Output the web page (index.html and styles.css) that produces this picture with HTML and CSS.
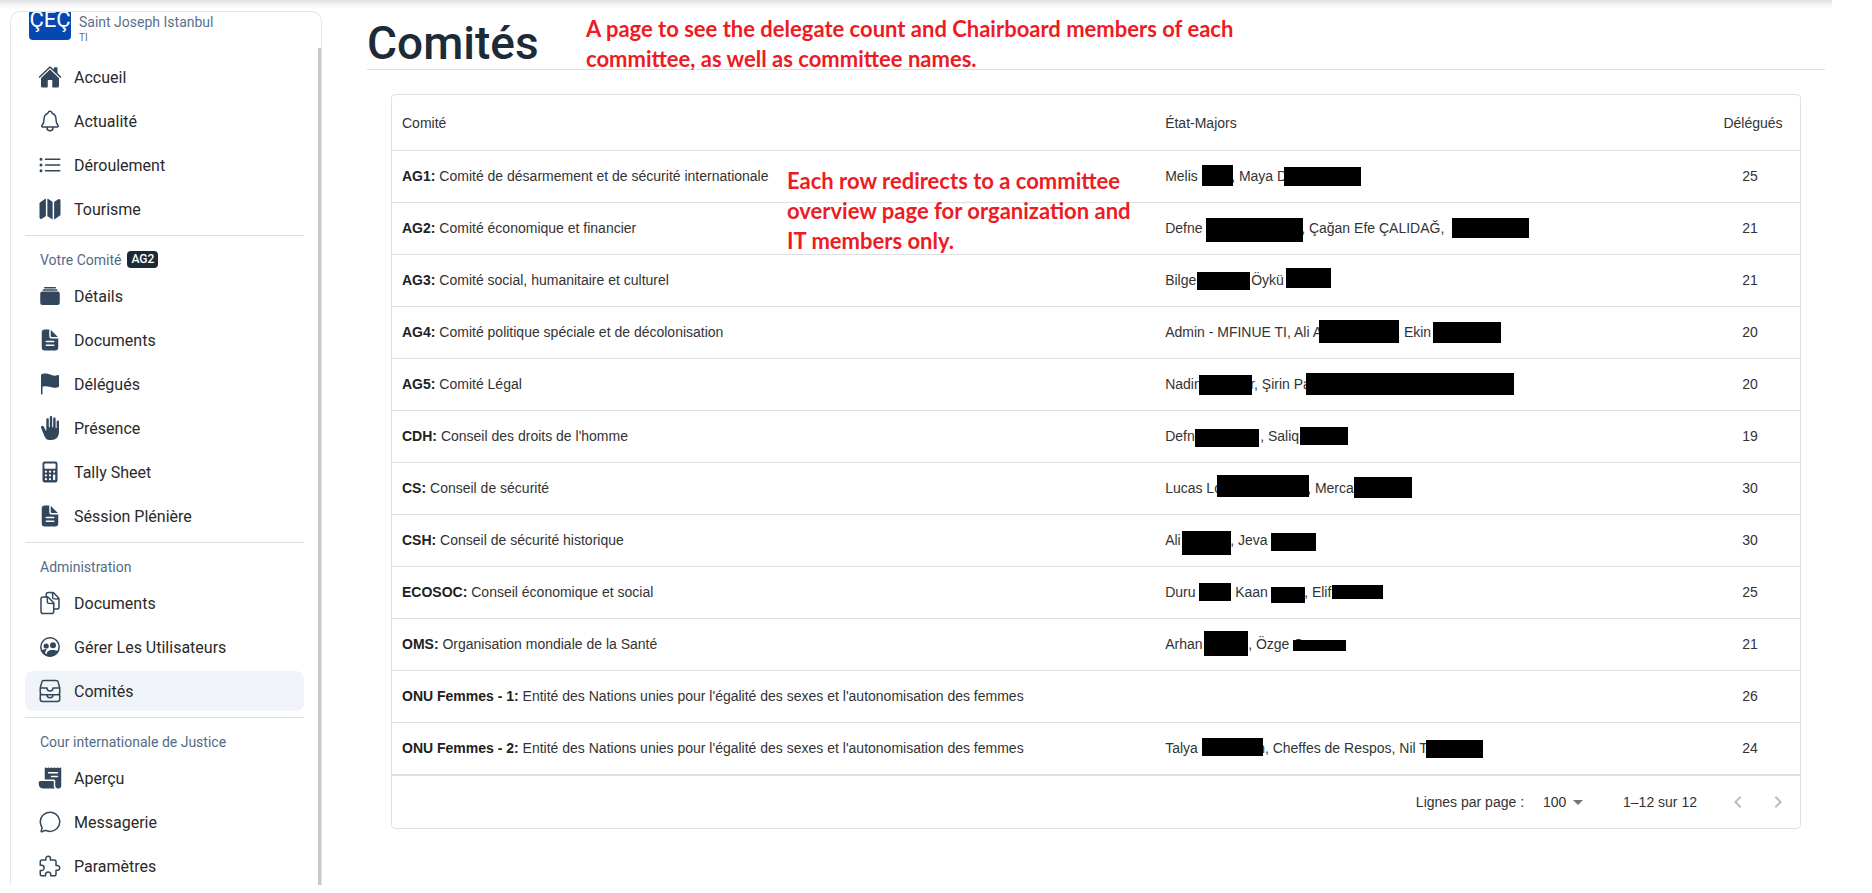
FILE: index.html
```html
<!DOCTYPE html>
<html lang="fr">
<head>
<meta charset="utf-8">
<meta name="viewport" content="width=device-width, initial-scale=1">
<title>Comités</title>
<link rel="stylesheet" href="styles.css">
</head>
<body>
<div class="top-shadow"></div>
<div class="layout">
  <aside class="sidebar">
    <a class="profile" href="#">
      <span class="logo">ÇEÇ</span>
      <span class="profile-text"><span class="profile-name">Saint Joseph Istanbul</span><span class="profile-role">TI</span></span>
    </a>
    <nav class="nav">
      <a class="item" href="#"><svg class="icon" viewBox="0 0 512 512"><path d="M261.56 101.28a8 8 0 00-11.06 0L66.4 277.15a8 8 0 00-2.47 5.79L63.9 448a32 32 0 0032 32H192a16 16 0 0016-16V328a8 8 0 018-8h80a8 8 0 018 8v136a16 16 0 0016 16h96.06a32 32 0 0032-32V282.94a8 8 0 00-2.47-5.79z"/><path d="M490.91 244.15l-74.8-71.56V64a16 16 0 00-16-16h-48a16 16 0 00-16 16v32l-57.92-55.38C272.77 35.14 264.71 32 256 32c-8.68 0-16.72 3.14-22.14 8.63l-212.7 203.5c-6.22 6-7 15.87-1.34 22.37A16 16 0 0043 267.56L250.5 69.28a8 8 0 0111.06 0l207.52 198.28a16 16 0 0022.59-.44c6.14-6.36 5.63-16.86-.76-22.97z"/></svg>Accueil</a>
      <a class="item" href="#"><svg class="icon line" viewBox="0 0 512 512"><path d="M427.68 351.43C402 320 383.87 304 383.87 217.35 383.87 138 343.35 109.73 310 96c-4.43-1.82-8.6-6-9.95-10.55C294.2 65.54 277.8 48 256 48s-38.21 17.55-44 37.47c-1.35 4.6-5.52 8.71-9.95 10.53-33.39 13.75-73.87 41.92-73.87 121.35C128.13 304 110 320 84.32 351.43 73.68 364.45 83 384 101.61 384h308.88c18.51 0 27.77-19.61 17.19-32.57zM320 384v16a64 64 0 01-128 0v-16"/></svg>Actualité</a>
      <a class="item" href="#"><svg class="icon line" viewBox="0 0 512 512"><path d="M160 132h304M160 256h304M160 380h304"/><circle cx="64" cy="132" r="16"/><circle cx="64" cy="256" r="16"/><circle cx="64" cy="380" r="16"/></svg>Déroulement</a>
      <a class="item" href="#"><svg class="icon" viewBox="0 0 512 512"><path d="M48.17 113.34A32 32 0 0032 141.24V438a32 32 0 0047 28.37c.43-.23.85-.47 1.26-.74l84.14-55.05a8 8 0 003.63-6.72V46.45a8 8 0 00-12.51-6.63zM212.36 39.31A8 8 0 00200 46v357.56a8 8 0 003.63 6.72l96 62.42A8 8 0 00312 466V108.67a8 8 0 00-3.64-6.73zM464.53 46.47a31.64 31.64 0 00-31.5-.88 12.07 12.07 0 00-1.25.74l-84.15 55a8 8 0 00-3.63 6.72v357.46a8 8 0 0012.52 6.63l107.07-73.46a32 32 0 0016.41-28v-296a32.76 32.76 0 00-15.47-28.21z"/></svg>Tourisme</a>
      <hr class="divider">
      <div class="label">Votre Comité <span class="badge">AG2</span></div>
      <a class="item" href="#"><svg class="icon" viewBox="0 0 512 512"><path d="M368 96H144a16 16 0 010-32h224a16 16 0 010 32zM400 144H112a16 16 0 010-32h288a16 16 0 010 32zM419.13 448H92.87A44.92 44.92 0 0148 403.13V204.87A44.92 44.92 0 0192.87 160h326.26A44.92 44.92 0 01464 204.87v198.26A44.92 44.92 0 01419.13 448z"/></svg>Détails</a>
      <a class="item" href="#"><svg class="icon" viewBox="0 0 512 512"><path d="M428 224H288a48 48 0 01-48-48V36a4 4 0 00-4-4h-92a64 64 0 00-64 64v320a64 64 0 0064 64h224a64 64 0 0064-64V228a4 4 0 00-4-4zm-92 160H176a16 16 0 010-32h160a16 16 0 010 32zm0-80H176a16 16 0 010-32h160a16 16 0 010 32z"/><path d="M419.22 188.59L275.41 44.78a2 2 0 00-3.41 1.41V176a16 16 0 0016 16h129.81a2 2 0 001.41-3.41z"/></svg>Documents</a>
      <a class="item" href="#"><svg class="icon" viewBox="0 0 512 512"><path d="M80 480a16 16 0 01-16-16V68.13a24 24 0 0111.88-20.72C88 40.38 112.38 32 160 32c37.21 0 78.83 14.71 115.55 27.68C305.12 70.13 333.05 80 352 80a183.84 183.84 0 0071-14.5 18 18 0 0125 16.58v219.36a20 20 0 01-12 18.31c-8.71 3.81-40.51 16.25-84 16.25-24.14 0-54.38-7.14-86.39-14.71C229.63 312.79 192.43 304 160 304c-36.87 0-55.74 5.58-64 9.11V464a16 16 0 01-16 16z"/></svg>Délégués</a>
      <a class="item" href="#"><svg class="icon" viewBox="0 0 512 512"><path transform="matrix(-1 0 0 1 512 0)" d="M432.8 211.44c-15.52-8.82-34.91-2.28-43.31 13.68l-41.38 84.41a7 7 0 01-8.93 3.43 7 7 0 01-4.41-6.55V72c0-13.91-12.85-24-26.77-24s-26 10.09-26 24v156.64A11.24 11.24 0 01271.21 240 11 11 0 01260 229V24c0-13.91-10.94-24-24.86-24S210 10.09 210 24v204.64A11.24 11.24 0 01199.21 240 11 11 0 01188 229V56c0-13.91-12.08-24-26-24s-26 11.09-26 25v187.64A11.24 11.24 0 01125.21 256 11 11 0 01114 245V120c0-13.91-11.08-24-25-24s-25.12 10.22-25 24v216c0 117.41 72 176 160 176h16c88 0 115.71-39.6 136-88l68.71-169c6.62-18 3.6-34.75-11.91-43.56z"/></svg>Présence</a>
      <a class="item" href="#"><svg class="icon" viewBox="0 0 512 512"><path fill-rule="evenodd" d="M144 32a48 48 0 00-48 48v352a48 48 0 0048 48h224a48 48 0 0048-48V80a48 48 0 00-48-48zM152 76h208a16 16 0 0116 16v76a16 16 0 01-16 16H152a16 16 0 01-16-16V92a16 16 0 0116-16zM168 224a24 24 0 110 48 24 24 0 010-48zM256 224a24 24 0 110 48 24 24 0 010-48zM344 224a24 24 0 110 48 24 24 0 010-48zM168 304a24 24 0 110 48 24 24 0 010-48zM256 304a24 24 0 110 48 24 24 0 010-48zM168 384a24 24 0 110 48 24 24 0 010-48zM256 384a24 24 0 110 48 24 24 0 010-48zM344 304a24 24 0 0124 24v80a24 24 0 01-48 0v-80a24 24 0 0124-24z"/></svg>Tally Sheet</a>
      <a class="item" href="#"><svg class="icon" viewBox="0 0 512 512"><path d="M428 224H288a48 48 0 01-48-48V36a4 4 0 00-4-4h-92a64 64 0 00-64 64v320a64 64 0 0064 64h224a64 64 0 0064-64V228a4 4 0 00-4-4zm-92 160H176a16 16 0 010-32h160a16 16 0 010 32zm0-80H176a16 16 0 010-32h160a16 16 0 010 32z"/><path d="M419.22 188.59L275.41 44.78a2 2 0 00-3.41 1.41V176a16 16 0 0016 16h129.81a2 2 0 001.41-3.41z"/></svg>Séssion Plénière</a>
      <hr class="divider">
      <div class="label">Administration</div>
      <a class="item" href="#"><svg class="icon line" viewBox="0 0 512 512"><path d="M336 264.13V436c0 24.3-19.05 44-42.95 44H107c-23.95 0-43-19.7-43-44V172a44.26 44.26 0 0144-44h94.12a24.55 24.55 0 0117.49 7.36l109.15 111a25.4 25.4 0 017.24 17.77z"/><path d="M200 128v108a28.34 28.34 0 0028 28h108M176 128V76a44.26 44.26 0 0144-44h94a24.83 24.83 0 0117.61 7.36l109.15 111A25.09 25.09 0 01448 168v172c0 24.3-19.05 44-42.95 44H344M312 32v108a28.34 28.34 0 0028 28h108"/></svg>Documents</a>
      <a class="item" href="#"><svg class="icon" viewBox="0 0 24 24"><circle cx="12" cy="12" r="9.2" fill="none" stroke="currentColor" stroke-width="1.5"/><circle cx="8.2" cy="11" r="2.6"/><circle cx="15" cy="10.2" r="3"/><path d="M3.5 15.4c1.4-1 3.4-1.3 5.6-.9-1.3.9-1.9 2.1-1.8 4.1l1.2 1c0-2.8 2-4.6 6-4.6 2.5 0 4.6.5 5.9 1.5-1.5 3-4.6 5-8.4 5-3.9 0-7.1-2.3-8.5-6.1z"/></svg>Gérer Les Utilisateurs</a>
      <a class="item active" href="#" aria-current="page"><svg class="icon line" viewBox="0 0 512 512"><path d="M384 32H128c-26 0-43 14-48 40L48 192v96a48.14 48.14 0 0048 48h320a48.14 48.14 0 0048-48v-96L432 72c-5-27-23-40-48-40zM48 192h144M320 192h144M192 192a64 64 0 00128 0M48 336v96a48.14 48.14 0 0048 48h320a48.14 48.14 0 0048-48v-96M48 336h144M320 336h144M192 336a64 64 0 00128 0"/></svg>Comités</a>
      <hr class="divider">
      <div class="label">Cour internationale de Justice</div>
      <a class="item" href="#"><svg class="icon" viewBox="0 0 512 512"><path d="M483.82 32.45a16.28 16.28 0 00-11.23 1.37L448 46.1l-24.8-12.4a16 16 0 00-14.31 0l-25.11 12.41L359 33.7a16 16 0 00-14.36 0L320 46.07l-24.45-12.34a16 16 0 00-14.35-.06L256 46.12l-24.8-12.43a16.05 16.05 0 00-14.33 0L192 46.1l-24.84-12.41a16 16 0 00-19.36 3.94 16.25 16.25 0 00-3.8 10.65V288l.05.05H336a32 32 0 0132 32V424c0 30.93 33.07 56 64 56h12a52 52 0 0052-52V48a16 16 0 00-12.18-15.55zM416 240H288.5c-8.64 0-16.1-6.64-16.48-15.28A16 16 0 01288 208h127.5c8.64 0 16.1 6.64 16.48 15.28A16 16 0 01416 240zm0-80H224.5c-8.64 0-16.1-6.64-16.48-15.28A16 16 0 01224 128h191.5c8.64 0 16.1 6.64 16.48 15.28A16 16 0 01416 160z"/><path d="M336 424v-88a16 16 0 00-16-16H48a32.1 32.1 0 00-32 32.05c0 50.55 5.78 71.57 14.46 87.57C45.19 466.79 71.86 480 112 480h245.68a4 4 0 002.85-6.81C351.07 463.7 336 451 336 424z"/></svg>Aperçu</a>
      <a class="item" href="#"><svg class="icon line" viewBox="0 0 512 512"><path d="M87.49 380c1.19-4.38-1.44-10.47-3.95-14.86a44.86 44.86 0 00-2.54-3.8 199.81 199.81 0 01-33-110C47.65 139.09 140.73 48 255.83 48 356.21 48 440 117.54 459.58 209.85a199 199 0 014.42 41.64c0 112.41-89.49 204.93-204.59 204.93-18.3 0-43-4.6-56.47-8.37s-26.92-8.77-30.39-10.11a31.09 31.09 0 00-11.12-2.07 30.71 30.71 0 00-12.09 2.43l-67.83 24.48a16 16 0 01-4.67 1.22 9.6 9.6 0 01-9.57-9.74 15.85 15.85 0 01.6-3.29z"/></svg>Messagerie</a>
      <a class="item" href="#"><svg class="icon line" viewBox="0 0 512 512"><path d="M413.66 246.1H386a2 2 0 01-2-2v-77.24A38.86 38.86 0 00345.14 128H267.9a2 2 0 01-2-2V98.34c0-27.14-21.5-49.86-48.64-50.33a49.53 49.53 0 00-50.4 49.51V126a2 2 0 01-2 2H87.62A39.74 39.74 0 0048 167.62V238a2 2 0 002 2h26.91c29.37 0 53.68 25.48 54.09 54.85.42 29.87-23.51 57.15-53.29 57.15H50a2 2 0 00-2 2v70.38A39.74 39.74 0 0087.62 464H158a2 2 0 002-2v-20.93c0-30.28 24.75-56.35 55-57.06 30.1-.7 57 20.31 57 50.28V462a2 2 0 002 2h71.14A38.86 38.86 0 00384 425.14v-78a2 2 0 012-2h28.48c27.63 0 49.52-22.67 49.52-50.4s-23.7-48.64-50.34-48.64z"/></svg>Paramètres</a>
    </nav>
    <div class="scroll-thumb"></div>
  </aside>
  <main class="main">
    <header class="page-head">
      <h1 class="title">Comités</h1>
      <p class="note note-page">A page to see the delegate count and Chairboard members of each<br>committee, as well as committee names.</p>
    </header>
    <section class="card">
      <p class="note note-rows">Each row redirects to a committee<br>overview page for organization and<br>IT members only.</p>
      <table class="grid">
        <colgroup><col class="col-name"><col><col class="col-count"></colgroup>
        <thead><tr><th>Comité</th><th>État-Majors</th><th class="count">Délégués</th></tr></thead>
        <tbody>
          <tr><td><b>AG1:</b> Comité de désarmement et de sécurité internationale</td><td><div class="staff"><span style="width:66px">Melis</span><span>, Maya D</span><svg class="mask"><rect x="37" y="14" width="31" height="21"/><rect x="119" y="16" width="77" height="19"/></svg></div></td><td class="count">25</td></tr>
          <tr><td><b>AG2:</b> Comité économique et financier</td><td><div class="staff"><span style="width:136px">Defne</span><span>, Çağan Efe ÇALIDAĞ,</span><svg class="mask"><rect x="41" y="15" width="97" height="24"/><rect x="287" y="15" width="77" height="20"/></svg></div></td><td class="count">21</td></tr>
          <tr><td><b>AG3:</b> Comité social, humanitaire et culturel</td><td><div class="staff"><span style="width:86px">Bilge</span><span>Öykü</span><svg class="mask"><rect x="32" y="17" width="53" height="18"/><rect x="121" y="13" width="45" height="20"/></svg></div></td><td class="count">21</td></tr>
          <tr><td><b>AG4:</b> Comité politique spéciale et de décolonisation</td><td><div class="staff"><span style="width:231px">Admin - MFINUE TI, Ali A</span><span>, Ekin</span><svg class="mask"><rect x="154" y="13" width="80" height="23"/><rect x="268" y="15" width="68" height="21"/></svg></div></td><td class="count">20</td></tr>
          <tr><td><b>AG5:</b> Comité Légal</td><td><div class="staff"><span style="width:85px">Nadin</span><span>r, Şirin Pa</span><svg class="mask"><rect x="34" y="16" width="53" height="20"/><rect x="141" y="14" width="208" height="22"/></svg></div></td><td class="count">20</td></tr>
          <tr><td><b>CDH:</b> Conseil des droits de l'homme</td><td><div class="staff"><span style="width:95px">Defn</span><span>, Saliq</span><svg class="mask"><rect x="30" y="18" width="64" height="18"/><rect x="135" y="16" width="48" height="18"/></svg></div></td><td class="count">19</td></tr>
          <tr><td><b>CS:</b> Conseil de sécurité</td><td><div class="staff"><span style="width:142px">Lucas Lo</span><span>, Merca</span><svg class="mask"><rect x="52" y="12" width="92" height="22"/><rect x="189" y="14" width="58" height="21"/></svg></div></td><td class="count">30</td></tr>
          <tr><td><b>CSH:</b> Conseil de sécurité historique</td><td><div class="staff"><span style="width:65px">Ali</span><span>, Jeva</span><svg class="mask"><rect x="17" y="16" width="49" height="24"/><rect x="106" y="18" width="45" height="18"/></svg></div></td><td class="count">30</td></tr>
          <tr><td><b>ECOSOC:</b> Conseil économique et social</td><td><div class="staff"><span style="width:70px">Duru</span><span style="width:69px">Kaan</span><span>, Elif</span><svg class="mask"><rect x="34" y="16" width="32" height="18"/><rect x="106" y="20" width="34" height="16"/><rect x="167" y="18" width="51" height="14"/></svg></div></td><td class="count">25</td></tr>
          <tr><td><b>OMS:</b> Organisation mondiale de la Santé</td><td><div class="staff"><span style="width:83px">Arhan</span><span>, Özge C</span><svg class="mask"><rect x="39" y="12" width="44" height="25"/><rect x="128" y="21" width="53" height="11"/></svg></div></td><td class="count">21</td></tr>
          <tr><td><b>ONU Femmes - 1:</b> Entité des Nations unies pour l'égalité des sexes et l'autonomisation des femmes</td><td></td><td class="count">26</td></tr>
          <tr><td><b>ONU Femmes - 2:</b> Entité des Nations unies pour l'égalité des sexes et l'autonomisation des femmes</td><td><div class="staff"><span style="width:92px">Talya</span><span>n, Cheffes de Respos, Nil T</span><svg class="mask"><rect x="37" y="15" width="61" height="18"/><rect x="261" y="17" width="57" height="18"/></svg></div></td><td class="count">24</td></tr>
        </tbody>
      </table>
      <footer class="pager">
        <label for="rows">Lignes par page :</label>
        <span class="select-wrap"><select id="rows"><option>100</option></select><svg class="caret" viewBox="0 0 10 5"><path d="M0 0h10L5 5z"/></svg></span>
        <span class="range">1–12 sur 12</span>
        <button class="page-btn" type="button" aria-label="Page précédente" disabled><svg viewBox="0 0 24 24"><path d="M15.41 7.41 14 6l-6 6 6 6 1.41-1.41L10.83 12z"/></svg></button>
        <button class="page-btn" type="button" aria-label="Page suivante" disabled><svg viewBox="0 0 24 24"><path d="M10 6 8.59 7.41 13.17 12l-4.58 4.59L10 18l6-6z"/></svg></button>
      </footer>
    </section>
  </main>
</div>
</body>
</html>
```
FILE: styles.css
```css
* { box-sizing: border-box; }
body { margin: 0; background: #fff; color: #2a2a2a; font-family: Roboto, sans-serif; overflow: hidden; }
a { color: inherit; text-decoration: none; }

.top-shadow { position: absolute; top: 0; left: 0; right: 40px; height: 9px; background: linear-gradient(#dfe0e4, #f3f3f6 45%, #fff); }

.layout { display: flex; height: 100vh; padding: 11px 40px 8px 10px; }

.sidebar { position: relative; flex: 0 0 312px; border: 1px solid #e0e7ef; border-bottom: 0; border-radius: 10px 10px 0 0; background: #fff; overflow: hidden; }
.scroll-thumb { position: absolute; top: 36px; right: 0; bottom: 0; width: 3px; background: #c8c8c8; }

.profile { display: flex; align-items: flex-start; gap: 8px; height: 28px; padding-left: 18px; color: #5a7189; }
.logo { flex: none; width: 42px; height: 28px; border-radius: 0 0 4px 4px; background: #0549b0; color: #fff; font-size: 22px; line-height: 16px; text-align: center; }
.profile-text { display: flex; flex-direction: column; }
.profile-name { font-size: 14px; line-height: 20px; }
.profile-role { font-size: 10px; line-height: 12px; }

.nav { padding: 17px 17px 0 14px; }
.item { display: flex; align-items: center; gap: 12px; height: 40px; margin-bottom: 4px; padding-left: 13px; border-radius: 8px; font-size: 16px; }
.item.active { background: #f0f4f8; }
.icon { flex: none; width: 24px; height: 24px; fill: currentColor; color: #32475b; }
.line { fill: none; stroke: currentColor; stroke-width: 32; stroke-linecap: round; stroke-linejoin: round; }
.divider { height: 1px; margin: 6px 0 0; border: 0; background: #dcdee0; }
.label { display: flex; align-items: center; gap: 6px; height: 40px; padding: 7px 0 0 15px; color: #526b85; font-size: 14px; }
.badge { padding: 0 4px; border-radius: 4px; background: #1d2935; color: #fff; font-size: 12px; line-height: 17px; font-weight: 500; }

.main { flex: 1; min-width: 0; padding: 0 7px 0 45px; }
.page-head { position: relative; height: 59px; border-bottom: 1px solid #dcdee0; }
.title { margin: 0; color: #1d2a37; font-size: 46px; line-height: 64px; font-weight: 500; }
.note { position: absolute; z-index: 1; margin: 0; color: #ed1c24; font-family: Lato, sans-serif; font-weight: 700; font-size: 22px; line-height: 30px; white-space: nowrap; }
.note-page { top: 3px; left: 219px; }
.note-rows { top: 71px; left: 395px; }

.card { position: relative; margin: 24px 24px 0; border: 1px solid #e0e0e0; border-radius: 4px; font-family: "Liberation Sans", sans-serif; font-size: 14px; color: #333; }
.grid { width: 100%; table-layout: fixed; border-collapse: separate; border-spacing: 0; }
.grid b { color: #212121; }
.col-name { width: 54.2%; }
.col-count { width: 100px; }
.grid th, .grid td { height: 52px; padding: 0 10px; border-bottom: 1px solid #e0e0e0; text-align: left; font-weight: 400; line-height: 16px; white-space: nowrap; }
.grid th { height: 56px; }
.grid tbody td { padding-bottom: 2px; }
.grid tbody tr:last-child td { height: 53px; border-bottom-width: 2px; }
.grid .count { text-align: center; }
.grid th.count { padding-left: 16px; }

.staff { position: relative; display: flex; align-items: center; height: 49px; white-space: pre; }
.staff span { flex: none; }
.mask { position: absolute; top: 0; left: 0; width: 100%; height: 100%; fill: #000; }

.pager { display: flex; align-items: center; justify-content: flex-end; height: 52px; padding-right: 2px; }
.select-wrap { position: relative; margin: 0 32px 0 14px; }
.select-wrap select { appearance: none; width: 53px; height: 24px; padding: 0 0 0 5px; border: 0; background: transparent; color: inherit; font: inherit; }
.caret { position: absolute; right: 8px; top: 10px; width: 10px; height: 5px; fill: #757575; pointer-events: none; }
.range { margin-right: 21px; }
.page-btn { display: flex; align-items: center; justify-content: center; width: 40px; height: 40px; padding: 0; border: 0; background: none; }
.page-btn svg { width: 24px; height: 24px; fill: #bdbdbd; }
```
